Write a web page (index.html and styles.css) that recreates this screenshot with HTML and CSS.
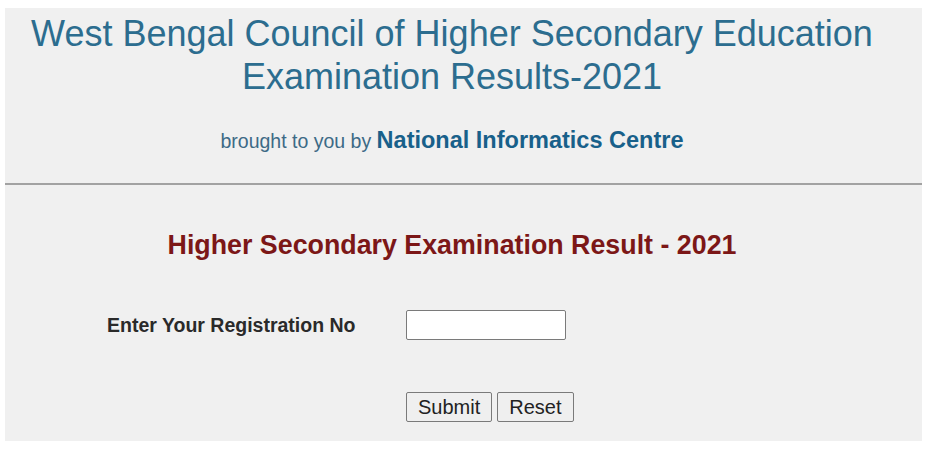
FILE: index.html
```html
<!DOCTYPE html>
<html>
<head>
<meta charset="utf-8">
<title>WBCHSE Results 2021</title>
<link rel="stylesheet" href="styles.css">
</head>
<body>
<div class="page">
  <header class="header">
    <h1 class="title">West Bengal Council of Higher Secondary Education<br>Examination Results-2021</h1>
    <p class="credit">brought to you by <b class="nic">National Informatics Centre</b></p>
  </header>
  <main class="main">
    <h2 class="heading">Higher Secondary Examination Result - 2021</h2>
    <form class="form">
      <div class="row">
        <label class="label" for="regno">Enter Your Registration No</label>
        <input class="field" id="regno" type="text">
      </div>
      <div class="row buttons">
        <span class="label"></span>
        <div class="btns">
          <button class="btn" type="submit">Submit</button>
          <button class="btn" type="reset">Reset</button>
        </div>
      </div>
    </form>
  </main>
</div>
</body>
</html>
```

FILE: styles.css
```css
html, body {
  margin: 0;
  padding: 0;
  background: #ffffff;
}

body {
  font-family: "Liberation Sans", Arial, sans-serif;
}

.page {
  margin: 8px 10px 0 5px;
  height: 433px;
  background: #f0f0f0;
  display: flex;
  flex-direction: column;
}

.header {
  height: 171px;
  padding: 4px 23px 0 0;
  text-align: center;
  border-bottom: 2px solid #a2a2a2;
}

.title {
  margin: 0;
  font-size: 36px;
  line-height: 43px;
  font-weight: normal;
  color: #2c6d8f;
}

.credit {
  margin: 29px 0 0;
  font-size: 19.5px;
  line-height: 26px;
  color: #3d6a86;
}

.nic {
  font-size: 23.5px;
  font-weight: bold;
  color: #18608a;
}

.main {
  padding: 45px 23px 0 0;
}

.heading {
  margin: 0;
  text-align: center;
  font-size: 26.8px;
  line-height: 30px;
  font-weight: bold;
  color: #7c1717;
}

.form {
  margin: 50px 0 0;
  padding-left: 102px;
}

.row {
  display: flex;
  align-items: center;
}

.label {
  width: 299px;
  font-size: 19.5px;
  font-weight: bold;
  color: #2a2a2a;
}

.field {
  box-sizing: border-box;
  width: 160px;
  height: 30px;
  margin: 0;
  border: 1px solid #7a7a7a;
  border-radius: 2px;
  background: #ffffff;
}

.buttons {
  margin-top: 52px;
}

.btns {
  display: flex;
  gap: 5px;
}

.btn {
  box-sizing: border-box;
  height: 30px;
  margin: 0;
  padding: 0 11px;
  font-family: "Liberation Sans", Arial, sans-serif;
  font-size: 20px;
  color: #222222;
  background: #efefef;
  border: 1px solid #7a7a7a;
  border-radius: 2px;
}
```
